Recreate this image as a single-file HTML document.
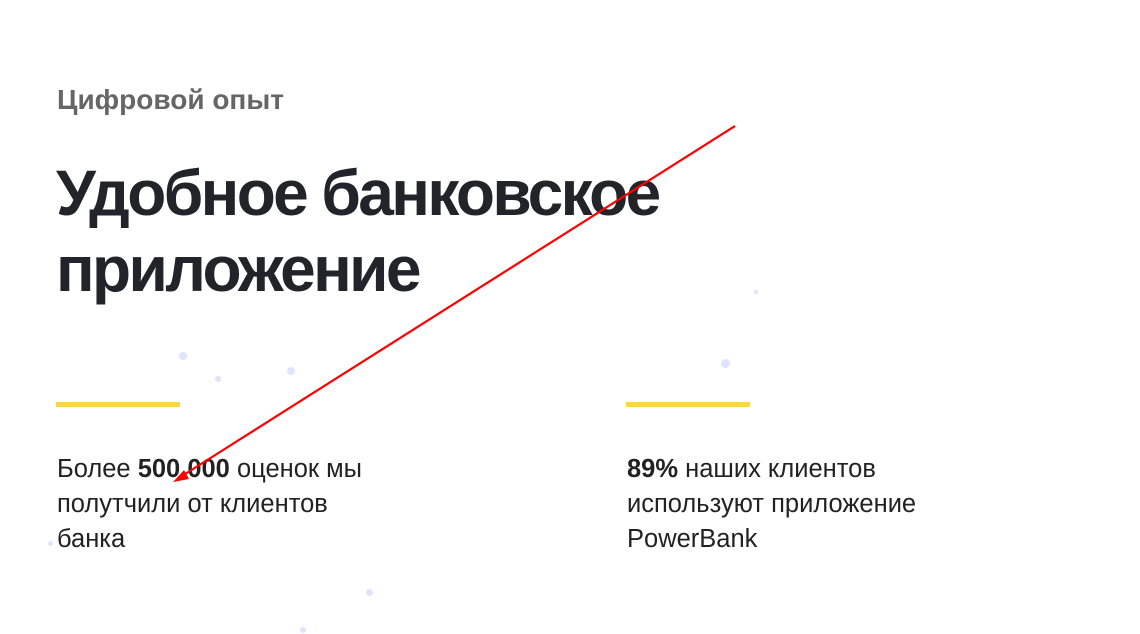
<!DOCTYPE html>
<html><head><meta charset="utf-8"><style>
body{margin:0;width:1140px;height:634px;background:#fff;position:relative;overflow:hidden;font-family:"Liberation Sans",sans-serif;}
.sub{position:absolute;left:57px;top:84px;font-size:28px;font-weight:bold;color:#666;letter-spacing:0;}
h1{position:absolute;left:56px;top:155px;margin:0;font-size:64px;line-height:76px;font-weight:bold;color:#222429;letter-spacing:-2.6px;}
.bar{position:absolute;top:402px;width:124px;height:5px;background:#fdd54a;}
.t{position:absolute;top:452px;font-size:25.5px;line-height:35px;color:#222;}
.dot{position:absolute;border-radius:50%;background:#dfe4fb;}
</style></head><body>
<div class="dot" style="left:179px;top:352px;width:8px;height:8px"></div>
<div class="dot" style="left:215px;top:376px;width:6px;height:6px"></div>
<div class="dot" style="left:287px;top:367px;width:8px;height:8px"></div>
<div class="dot" style="left:721px;top:359px;width:9px;height:9px"></div>
<div class="dot" style="left:754px;top:290px;width:4px;height:4px"></div>
<div class="dot" style="left:48px;top:541px;width:5px;height:5px"></div>
<div class="dot" style="left:366px;top:589px;width:7px;height:7px"></div>
<div class="dot" style="left:300px;top:627px;width:6px;height:6px"></div>
<div class="sub">Цифровой опыт</div>
<h1>Удобное банковское<br>приложение</h1>
<div class="bar" style="left:56px"></div>
<div class="bar" style="left:626px"></div>
<div class="t" style="left:57px">Более <b>500 000</b> оценок мы<br>полутчили от клиентов<br>банка</div>
<div class="t" style="left:627px"><b>89%</b> наших клиентов<br>используют приложение<br>PowerBank</div>
<svg style="position:absolute;left:0;top:0" width="1140" height="634">
<line x1="735" y1="126" x2="182" y2="476" stroke="#f00" stroke-width="2.2"/>
<polygon points="173,482 184,470 189,479" fill="#f00"/>
</svg>
</body></html>
